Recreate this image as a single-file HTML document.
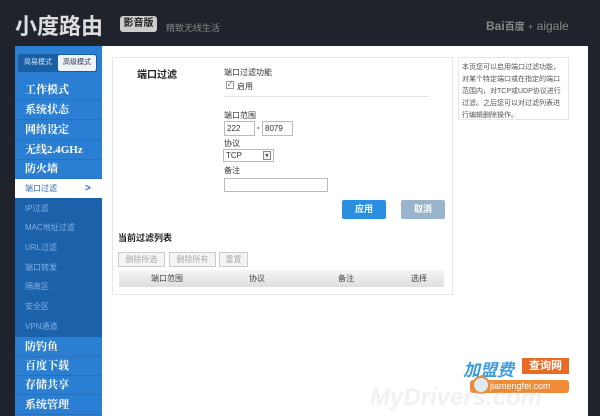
<!DOCTYPE html>
<html><head><meta charset="utf-8"><style>
*{margin:0;padding:0;box-sizing:border-box}
body{width:600px;height:416px;background:#1f232b;font-family:"Liberation Sans","Noto Sans CJK SC",sans-serif;position:relative;overflow:hidden;font-size:9px;color:#333}
.a{position:absolute}
.side{left:15px;top:46px;width:87px;height:370px;background:#2a7fd2}
.it{position:absolute;left:15px;width:87px;height:20px;line-height:20px;padding-left:10px;color:#fff;font-weight:bold;font-size:11px;font-family:"Liberation Serif","Noto Serif CJK SC",serif;border-bottom:1px solid #2571bd}
.sub{position:absolute;left:15px;width:87px;height:20px;line-height:20px;padding-left:10px;color:#7fb0e3;font-size:8px}
.main{left:102px;top:46px;width:486px;height:370px;background:#fff}
.inp{position:absolute;border:1px solid #bbb;height:15px;font-size:8px;line-height:13px;padding-left:2px;background:#fff}
.btn{position:absolute;border:1px solid #ccc;background:#f4f4f4;color:#aaa;height:15px;line-height:13px;font-size:8px;text-align:center}
</style></head><body>
<div class="a" style="left:15px;top:9px;font-size:22px;font-weight:bold;color:#ddd">小度路由</div>
<div class="a" style="left:120px;top:16px;width:37px;height:16px;background:#ccc;border-radius:3px;color:#222;font-size:10px;font-weight:bold;text-align:center;line-height:16px">影音版</div>
<div class="a" style="left:166px;top:21px;color:#888;font-size:9px">精致无线生活</div>
<div class="a" style="left:486px;top:18px;color:#888;font-size:12px;font-weight:bold">Bai<span style="font-size:10px">百度</span> <span style="font-weight:normal;font-size:9px">+</span> <span style="font-weight:normal">aigale</span></div>
<div class="a main"></div>
<div class="a side"></div>
<div class="a" style="left:18px;top:54px;width:79px;height:18px;background:#1a5fa3;border-radius:2px"></div>
<div class="a" style="left:19px;top:55px;width:38px;height:16px;color:#cfe2f5;font-size:7px;line-height:16px;text-align:center">简易模式</div>
<div class="a" style="left:58px;top:55px;width:38px;height:16px;background:#eef3f8;border-radius:2px;color:#335;font-size:7px;line-height:16px;text-align:center">高级模式</div>
<div class="it" style="top:80px">工作模式</div>
<div class="it" style="top:100px">系统状态</div>
<div class="it" style="top:120px">网络设定</div>
<div class="it" style="top:140px">无线2.4GHz</div>
<div class="it" style="top:159px">防火墙</div>
<div class="a" style="left:15px;top:179px;width:87px;height:19px;background:#fff;color:#2a6bb0;font-size:8px;line-height:19px;padding-left:10px">端口过滤<span style="position:absolute;left:70px;font-weight:bold;font-size:10px">&gt;</span></div>
<div class="a" style="left:15px;top:198px;width:87px;height:139px;background:#1c62ab"></div>
<div class="sub" style="top:199px">IP过滤</div>
<div class="sub" style="top:218px">MAC地址过滤</div>
<div class="sub" style="top:238px">URL过滤</div>
<div class="sub" style="top:258px">端口转发</div>
<div class="sub" style="top:277px">隔离区</div>
<div class="sub" style="top:297px">安全区</div>
<div class="sub" style="top:317px">VPN通道</div>
<div class="it" style="top:337px">防钓鱼</div>
<div class="it" style="top:356px">百度下载</div>
<div class="it" style="top:375px">存储共享</div>
<div class="it" style="top:395px">系统管理</div>
<div class="a" style="left:112px;top:57px;width:341px;height:238px;border:1px solid #e6e6e6"></div>
<div class="a" style="left:137px;top:66px;font-size:10px;font-weight:bold;color:#222">端口过滤</div>
<div class="a" style="left:224px;top:67px;font-size:8px">端口过滤功能</div>
<div class="a" style="left:226px;top:81px;width:8px;height:8px;border:1px solid #999;font-size:7px;line-height:6px;text-align:center;color:#555">✓</div>
<div class="a" style="left:237px;top:81px;font-size:8px">启用</div>
<div class="a" style="left:224px;top:96px;width:205px;height:1px;background:#e3e3e3"></div>
<div class="a" style="left:224px;top:110px;font-size:8px">端口范围</div>
<div class="inp" style="left:224px;top:121px;width:31px">222</div>
<div class="a" style="left:257px;top:123px;font-size:8px;font-weight:bold">-</div>
<div class="inp" style="left:262px;top:121px;width:31px">8079</div>
<div class="a" style="left:224px;top:138px;font-size:8px">协议</div>
<div class="inp" style="left:223px;top:149px;width:51px;height:13px;line-height:11px">TCP<span style="position:absolute;right:2px;top:1px;width:8px;height:9px;border:1px solid #888;background:#eee;font-size:5px;line-height:8px;text-align:center">▼</span></div>
<div class="a" style="left:224px;top:165px;font-size:8px">备注</div>
<div class="inp" style="left:224px;top:178px;width:104px;height:14px"></div>
<div class="a" style="left:342px;top:200px;width:44px;height:19px;background:#2a8fe0;border-radius:2px;color:#fff;font-size:9px;font-weight:bold;line-height:19px;text-align:center">应用</div>
<div class="a" style="left:401px;top:200px;width:44px;height:19px;background:#9ab5cb;border-radius:2px;color:#fff;font-size:9px;font-weight:bold;line-height:19px;text-align:center">取消</div>
<div class="a" style="left:118px;top:231px;font-size:9px;font-weight:bold;color:#222">当前过滤列表</div>
<div class="btn" style="left:118px;top:252px;width:47px">删除所选</div>
<div class="btn" style="left:169px;top:252px;width:47px">删除所有</div>
<div class="btn" style="left:219px;top:252px;width:29px">重置</div>
<div class="a" style="left:119px;top:270px;width:325px;height:17px;background:linear-gradient(#f6f6f6,#dedede);border-radius:2px;font-size:8px;line-height:17px;color:#444">
<span class="a" style="left:32px">端口范围</span><span class="a" style="left:130px">协议</span><span class="a" style="left:219px">备注</span><span class="a" style="left:292px">选择</span></div>
<div class="a" style="left:458px;top:57px;width:111px;height:63px;border:1px solid #e6e6e6;padding:4px 3px;font-size:7px;line-height:12px;color:#555">本页您可以启用端口过滤功能，对某个特定端口或在指定的端口范围内，对TCP或UDP协议进行过滤。之后您可以对过滤列表进行编辑删除操作。</div>
<div class="a" style="left:463px;top:356px;font-size:17px;font-weight:bold;color:#3a9be0;font-style:italic">加盟费</div>
<div class="a" style="left:522px;top:358px;width:47px;height:16px;background:#e86a24;color:#fff;font-size:11px;font-weight:bold;line-height:16px;text-align:center">查询网</div>
<div class="a" style="left:470px;top:380px;width:99px;height:13px;background:#ef8a35;border-radius:3px;color:#fff;font-size:9px;line-height:13px;padding-left:20px">jiamengfei.com</div>
<div class="a" style="left:472px;top:376px;width:18px;height:18px;border-radius:50%;background:#dfeaf3;border:2px solid #ef8a35"></div>
<div class="a" style="left:370px;top:384px;font-size:24px;font-weight:bold;font-style:italic;color:rgba(210,215,220,0.35)">MyDrivers.com</div>
</body></html>
